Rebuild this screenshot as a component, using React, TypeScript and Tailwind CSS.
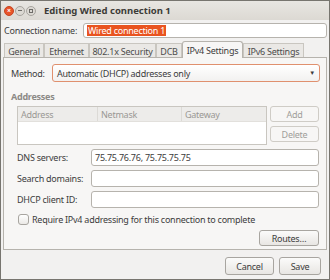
import React from 'react';

const FONT = "font-['Noto_Sans',sans-serif]";

const Field = ({ label, value }: { label: string; value?: string }) => (
  <div className="flex items-center h-[17px]">
    <div className="w-[74px] text-[#3c3c3c]">{label}</div>
    <div className="flex-1 h-[17px] rounded-[3px] border border-[#b6b3ad] bg-white px-[3px] flex items-center text-[#3c3c3c]">
      {value}
    </div>
  </div>
);

const TABS = [
  { label: 'General', w: 'w-[40px]' },
  { label: 'Ethernet', w: 'w-[45px]' },
  { label: '802.1x Security', w: 'w-[67px]' },
  { label: 'DCB', w: 'w-[26px]' },
  { label: 'IPv4 Settings', w: 'w-[61px]' },
  { label: 'IPv6 Settings', w: 'w-[61px]' },
];

export default function App() {
  return (
    <div className={`${FONT} w-[330px] h-[280px] bg-[#f2f1f0] border border-[#77756f] flex flex-col text-[9px] leading-none tracking-[-0.25px] text-[#3c3c3c]`}>
      {/* title bar */}
      <div className="h-[19px] bg-gradient-to-b from-[#e8e6e2] to-[#dcd9d3] flex items-center pl-[3px]">
        <div className="w-[10px] h-[10px] rounded-full bg-[#e8542a] border border-[#c7451f] flex items-center justify-center text-white text-[7px] font-bold">×</div>
        <div className="w-[10px] h-[10px] rounded-full bg-[#dcd9d3] border border-[#a8a59f] ml-[1px] flex items-center justify-center">
          <div className="w-[4px] h-[1px] bg-[#6e6c68]" />
        </div>
        <div className="w-[10px] h-[10px] rounded-full bg-[#dcd9d3] border border-[#a8a59f] ml-[1px] flex items-center justify-center">
          <div className="w-[4px] h-[4px] border border-[#6e6c68]" />
        </div>
        <div className="ml-[8px] font-bold text-[9.5px] tracking-normal text-[#3c3b37]">Editing Wired connection 1</div>
      </div>

      {/* connection name */}
      <div className="flex items-center h-[17px] mt-[2px] pl-[3px] pr-[2px]">
        <div className="w-[79px]">Connection name:</div>
        <div className="flex-1 h-[15px] rounded-[3px] border border-[#b6b3ad] bg-white flex items-center px-[3px]">
          <span className="bg-[#e95420] text-white px-[1px] leading-[11px]">Wired connection 1</span>
        </div>
      </div>

      {/* tabs */}
      <div className="flex items-end h-[17px] mt-[2px] pl-[3px]">
        {TABS.map((t) => (
          t.label === 'IPv4 Settings' ? (
            <div key={t.label} className={`${t.w} h-[17px] flex items-center justify-center bg-[#f7f6f5] border border-b-0 border-[#b6b3ad] rounded-t-[3px] relative z-10 text-[#3c3c3c]`}>{t.label}</div>
          ) : (
            <div key={t.label} className={`${t.w} h-[15px] flex items-center justify-center border border-b-0 border-[#c9c6c0] text-[#4c4c4c] bg-[#eae8e5]`}>{t.label}</div>
          )
        ))}
      </div>

      {/* panel */}
      <div className="mx-[2px] h-[193px] border border-[#b6b3ad] bg-[#f7f6f5] -mt-px px-[7px] pt-[6px] flex flex-col">
        <div className="flex items-center h-[18px]">
          <div className="w-[41px]">Method:</div>
          <div className="flex-1 h-[18px] rounded-[3px] border border-[#e0906e] bg-gradient-to-b from-white to-[#f2f1f0] flex items-center px-[4px] mr-[-1px]">
            <span className="flex-1">Automatic (DHCP) addresses only</span>
            <span className="text-[6px]">▼</span>
          </div>
        </div>

        <div className="mt-[10px] font-bold text-[#8c8a86]">Addresses</div>

        <div className="flex mt-[5px] pl-[6px]">
          <div className="w-[251px] h-[39px] border border-[#c9c6c0] bg-white flex flex-col">
            <div className="flex h-[15px] bg-[#edecea] text-[#9a9894] border-b border-[#e2e0dc]">
              <div className="w-[80px] px-[3px] flex items-center border-r border-[#dcdad6]">Address</div>
              <div className="w-[84px] px-[3px] flex items-center border-r border-[#dcdad6]">Netmask</div>
              <div className="flex-1 px-[3px] flex items-center">Gateway</div>
            </div>
          </div>
          <div className="ml-[3px] flex flex-col gap-[4px]">
            <div className="w-[49px] h-[16px] rounded-[3px] border border-[#cfccc6] flex items-center justify-center text-[#a09e9a]">Add</div>
            <div className="w-[49px] h-[16px] rounded-[3px] border border-[#cfccc6] flex items-center justify-center text-[#a09e9a]">Delete</div>
          </div>
        </div>

        <div className="mt-[4px] pl-[6px] flex flex-col gap-[4px] pr-[0px]">
          <Field label="DNS servers:" value="75.75.76.76, 75.75.75.75" />
          <Field label="Search domains:" />
          <Field label="DHCP client ID:" />
        </div>

        <div className="flex items-center mt-[6px] pl-[7px]">
          <div className="w-[11px] h-[11px] rounded-[3px] border border-[#a8a5a0] bg-gradient-to-b from-white to-[#ebe9e6]" />
          <span className="ml-[3px]">Require IPv4 addressing for this connection to complete</span>
        </div>

        <div className="flex justify-end mt-[5px]">
          <div className="w-[60px] h-[16px] rounded-[3px] border border-[#a8a5a0] bg-gradient-to-b from-[#fbfbfa] to-[#e8e6e3] flex items-center justify-center">Routes…</div>
        </div>
      </div>

      {/* footer */}
      <div className="flex justify-end gap-[5px] mt-[7px] pr-[8px]">
        <div className="w-[49px] h-[18px] rounded-[3px] border border-[#a8a5a0] bg-gradient-to-b from-[#fbfbfa] to-[#e8e6e3] flex items-center justify-center">Cancel</div>
        <div className="w-[42px] h-[18px] rounded-[3px] border border-[#a8a5a0] bg-gradient-to-b from-[#fbfbfa] to-[#e8e6e3] flex items-center justify-center">Save</div>
      </div>
    </div>
  );
}
